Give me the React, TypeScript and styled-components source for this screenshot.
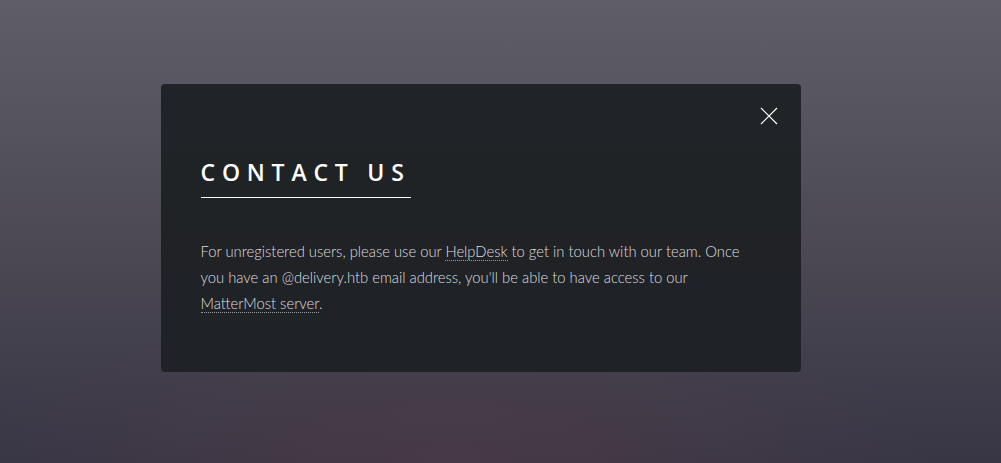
import * as React from 'react';
import styled, { createGlobalStyle } from 'styled-components';

const GlobalStyle = createGlobalStyle`
  html, body, #root {
    margin: 0;
    padding: 0;
    height: 100%;
  }
  body {
    font-family: 'Lato', 'Open Sans', sans-serif;
    color: #fff;
  }
`;

/*************************************************************************/

const Page = styled.div`
  min-height: 100vh;
  box-sizing: border-box;
  display: flex;
  justify-content: center;
  align-items: center;
  padding: 0 40px 8px 0;
  background:
    radial-gradient(ellipse 60% 45% at 45% 100%, rgba(90, 60, 70, 0.45), transparent 80%),
    linear-gradient(to bottom, #5f5e68 0%, #4b4853 55%, #383645 100%);
`;

const Article = styled.article`
  position: relative;
  width: 640px;
  box-sizing: border-box;
  padding: 72px 40px 24px 40px;
  background: rgba(30, 33, 36, 0.95);
  border-radius: 4px;
`;

const Close = styled.button`
  position: absolute;
  top: 0;
  right: 0;
  width: 64px;
  height: 64px;
  padding: 0;
  border: none;
  background: transparent;
  display: flex;
  align-items: center;
  justify-content: center;
  cursor: pointer;
`;

const Title = styled.h2`
  display: inline-block;
  margin: 0 0 40px 0;
  padding: 0 0 9px 0;
  font-family: 'Open Sans', sans-serif;
  font-size: 23px;
  line-height: 32px;
  font-weight: 600;
  letter-spacing: 6.8px;
  text-transform: uppercase;
  border-bottom: 1px solid #fff;
`;

const Body = styled.p`
  margin: 0 0 32px 0;
  font-size: 14.8px;
  line-height: 26px;
  font-weight: 300;
  color: rgba(255, 255, 255, 0.86);
`;

const Link = styled.a`
  color: inherit;
  text-decoration: none;
  border-bottom: 1px dotted rgba(255, 255, 255, 0.55);
`;

export default function App() {
  return (
    <>
      <GlobalStyle />
      <Page>
        <Article>
          <Title>Contact Us</Title>
          <Body>
            For unregistered users, please use our <Link href="#">HelpDesk</Link> to get in
            touch with our team. Once you have an @delivery.htb email address, you'll be able
            to have access to our <Link href="#">MatterMost server</Link>.
          </Body>
          <Close aria-label="Close">
            <svg width="18" height="18" viewBox="0 0 18 18">
              <path d="M1 1 L17 17 M17 1 L1 17" stroke="#fff" strokeWidth="1.2" />
            </svg>
          </Close>
        </Article>
      </Page>
    </>
  );
}
